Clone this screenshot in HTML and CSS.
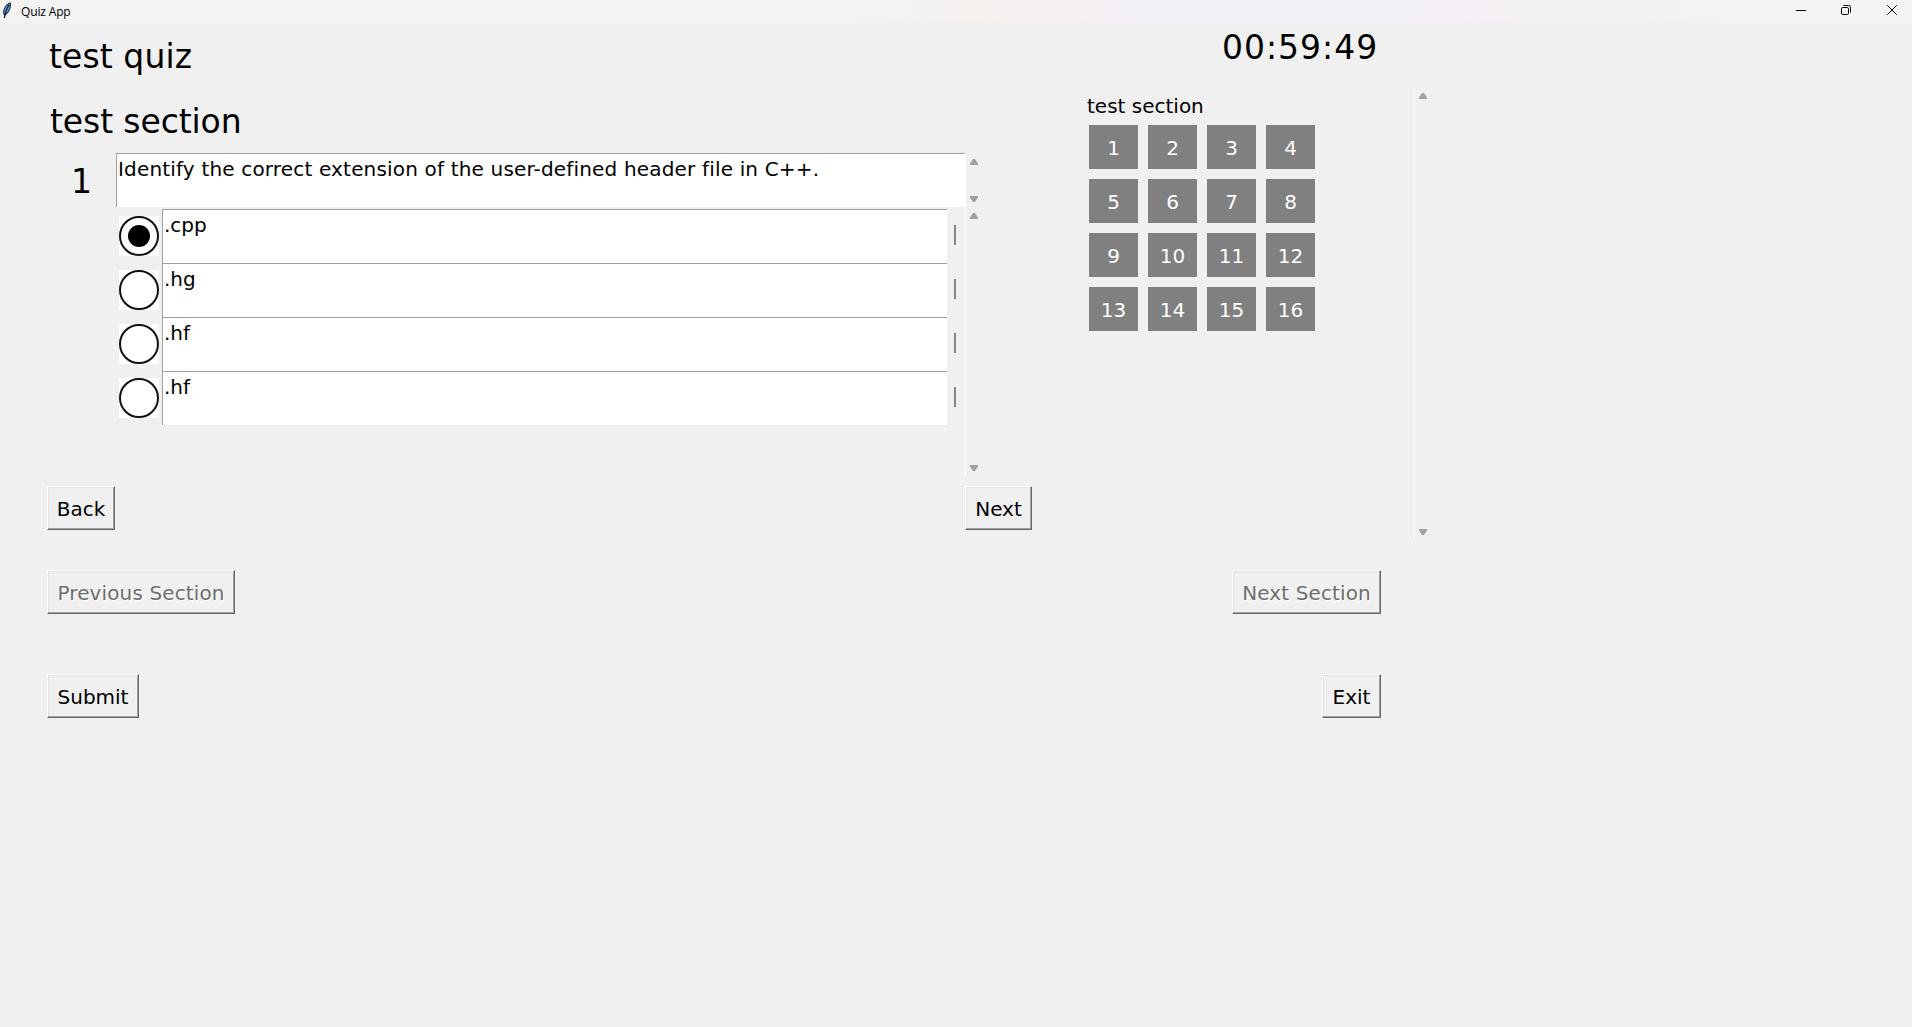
FILE: index.html
```html
<!DOCTYPE html>
<html lang="en">
<head>
<meta charset="utf-8">
<title>Quiz App</title>
<link rel="stylesheet" href="styles.css">
</head>
<body>
<header class="titlebar">
  <svg class="app-icon" width="10" height="17" viewBox="0 0 10 17"><path d="M2.4 13.2C.4 9.500 2.500 3.500 8 .7C9.500 4 7 10.500 3.500 12.500Z" fill="#5b9bea" stroke="#26313f" stroke-width="1.1"/><path d="M7 3Q3.500 8 2.400 16" fill="none" stroke="#111" stroke-width="1.2"/></svg>
  <span class="app-name">Quiz App</span>
  <svg class="controls" width="112" height="22" viewBox="0 0 112 22"><path d="M6 10.500H16" stroke="#000"/><rect x="51.500" y="7.500" width="7" height="7" rx="1.300" fill="none" stroke="#000"/><path d="M53.500 5.500H58.500Q60.500 5.500 60.500 7.500V12.500" fill="none" stroke="#000"/><path d="M97.200 5.200L106.800 14.800M106.800 5.200L97.200 14.800" stroke="#000"/></svg>
</header>
<main class="window">
  <section class="left">
    <h1 class="quiz-name">test quiz</h1>
    <h2 class="section-name">test section</h2>
    <div class="question">
      <div class="number">1</div>
      <div class="body">
        <div class="prompt"><span>Identify the correct extension of the user-defined header file in C++.</span></div>
        <div class="options">
          <div class="option"><svg class="radio" viewBox="0 0 40 40"><circle cx="20" cy="20" r="19" /><circle class="dot" cx="20" cy="20" r="11"/></svg><div class="answer">.cpp</div><i class="mark"></i></div>
          <div class="option"><svg class="radio" viewBox="0 0 40 40"><circle cx="20" cy="20" r="19"/></svg><div class="answer">.hg</div><i class="mark"></i></div>
          <div class="option"><svg class="radio" viewBox="0 0 40 40"><circle cx="20" cy="20" r="19"/></svg><div class="answer">.hf</div><i class="mark"></i></div>
          <div class="option"><svg class="radio" viewBox="0 0 40 40"><circle cx="20" cy="20" r="19"/></svg><div class="answer">.hf</div><i class="mark"></i></div>
        </div>
      </div>
      <div class="bars">
        <div class="scroll short"><i class="up"></i><i class="down"></i></div>
        <div class="scroll tall"><i class="up"></i><i class="down"></i></div>
      </div>
    </div>
  </section>
  <aside class="right">
    <div class="timer">00:59:49</div>
    <div class="navigator">
      <div class="nav-content">
        <div class="nav-title">test section</div>
        <div class="cells">
          <b>1</b><b>2</b><b>3</b><b>4</b><b>5</b><b>6</b><b>7</b><b>8</b><b>9</b><b>10</b><b>11</b><b>12</b><b>13</b><b>14</b><b>15</b><b>16</b>
        </div>
      </div>
      <div class="scroll nav-scroll"><i class="up"></i><i class="down"></i></div>
    </div>
  </aside>
</main>
<footer class="actions">
  <div class="row steps"><button class="back"><span>Back</span></button><button class="next"><span>Next</span></button></div>
  <div class="row"><button class="prev-section" disabled><span>Previous Section</span></button><button class="next-section" disabled><span>Next Section</span></button></div>
  <div class="row"><button class="submit"><span>Submit</span></button><button class="exit"><span>Exit</span></button></div>
</footer>
</body>
</html>
```
FILE: styles.css
```css
* { box-sizing: border-box; }
body { margin: 0; height: 1027px; overflow: hidden; background: #f0f0f0; color: #000; font: 20px/24px "DejaVu Sans", sans-serif; font-variant-ligatures: none; }
h1, h2 { margin: 0; font-weight: 400; }
.titlebar { display: flex; align-items: flex-start; height: 23px; padding-left: 2px; background: linear-gradient(90deg, #f3f3f3 0 45%, #f5f1ef 52%, #f4f0f4 57%, #f3f0f8 62% 71%, #f5f0f6 76%, #f3f1f3 82%, #f3f3f3 90%); }
.app-icon { margin-top: 2px; }
.app-name { margin-left: 9px; font: 12px/16px "Open Sans", sans-serif; padding-top: 4px; letter-spacing: -0.15px; }
.controls { margin-left: auto; margin-right: 10px; }
.window { display: flex; height: 463px; }
.left { width: 1087px; }
.quiz-name, .section-name, .number, .timer { font-size: 33px; line-height: 40px; white-space: nowrap; }
.quiz-name { margin: 14px 0 0 49px; letter-spacing: 0.1px; }
.section-name { margin: 25px 0 0 50px; letter-spacing: -0.1px; }
.question { display: flex; margin-top: 11px; }
.number { width: 116px; padding: 9px 0 0 71px; }
.body { width: 849px; }
.prompt { height: 54px; padding: 3px 0 0 1px; background: #fff; border: solid #a0a0a0; border-width: 1px 0 0 1px; white-space: nowrap; letter-spacing: 0.17px; }
.options { padding: 2px 0 0 3px; }
.option { display: flex; height: 54px; }
.radio { width: 40px; height: 40px; margin: 7px 3px 0 0; background: #fff; }
.radio circle { fill: none; stroke: #111; stroke-width: 2; }
.radio .dot { fill: #000; stroke: none; }
.answer { width: 785px; padding: 3px 0 0 1px; background: #fff; border: solid #a0a0a0; border-width: 1px 0 0 1px; }
.mark { width: 2px; height: 20px; margin: 16px 0 0 7px; background: #878787; }
.bars { border-left: 1px solid #fff; height: 323px; }
.scroll { display: flex; flex-direction: column; justify-content: space-between; width: 16px; padding: 6px 4px; }
.short { height: 55px; }
.tall { height: 268px; padding: 5px 4px; }
.scroll i { width: 8px; height: 6px; background: #a0a0a0; }
.up { clip-path: polygon(38% 0, 62% 0, 100% 75%, 100% 100%, 0 100%, 0 75%); }
.down { clip-path: polygon(0 0, 100% 0, 100% 25%, 62% 100%, 38% 100%, 0 25%); }
.timer { margin: 5px 0 0 135px; letter-spacing: 1px; }
.navigator { display: flex; width: 344px; margin-top: 19px; }
.nav-content { width: 327px; padding-top: 7px; }
.cells { display: grid; grid-template-columns: repeat(4, 49px); grid-auto-rows: 44px; gap: 10px; padding: 7px 0 0 2px; }
.cells b { font-weight: 400; color: #fff; background: #808080; text-align: center; line-height: 46px; }
.nav-scroll { height: 453px; width: 17px; padding-bottom: 5px; border-left: 1px solid #fff; }
.row { display: flex; justify-content: space-between; width: 1381px; padding-left: 47px; margin-bottom: 60px; }
.steps { width: 1032px; margin-bottom: 40px; }
button { height: 44px; padding: 2px 0 0; border: 1px solid; border-color: #fff #696969 #696969 #fff; background: #f0f0f0; box-shadow: inset -1px -1px #a0a0a0, inset 1px 1px #e3e3e3; color: #000; font: 20px/40px "DejaVu Sans", sans-serif; white-space: nowrap; }
button:disabled { color: #6d6d6d; text-shadow: 1px 1px #fff; letter-spacing: 0.12px; }
.back { width: 68px; }
.next { width: 67px; }
.prev-section { width: 188px; }
.next-section { width: 149px; }
.submit { width: 92px; }
.exit { width: 59px; }
```
